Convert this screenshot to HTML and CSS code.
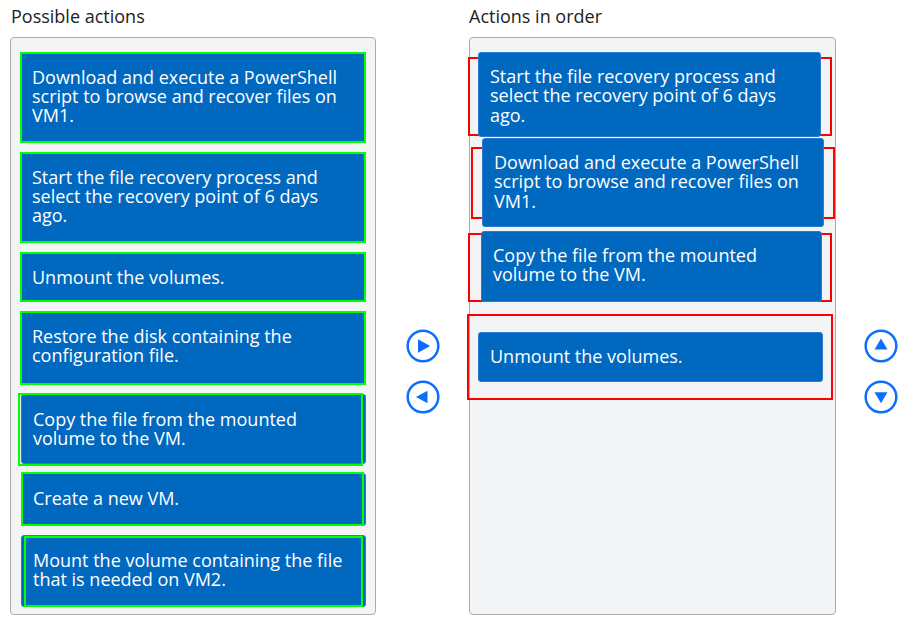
FILE: index.html
```html
<!DOCTYPE html>
<html lang="en">
<head>
<meta charset="utf-8">
<title>Order the actions</title>
<link rel="stylesheet" href="styles.css">
</head>
<body>
<div class="page">
  <section class="col col-left">
    <h2 class="col-title col-title-left">Possible actions</h2>
    <div class="panel panel-left">
      <div class="card card-src c1">Download and execute a PowerShell script to browse and recover files on VM1.</div>
      <div class="card card-src c2">Start the file recovery process and select the recovery point of 6 days ago.</div>
      <div class="card card-src c3">Unmount the volumes.</div>
      <div class="card card-src c4">Restore the disk containing the configuration file.</div>
      <div class="card card-src c5">Copy the file from the mounted volume to the VM.</div>
      <div class="card card-src c6">Create a new VM.</div>
      <div class="card card-src c7">Mount the volume containing the file that is needed on VM2.</div>
    </div>
  </section>

  <div class="mover mover-mid">
    <button class="mv-btn" aria-label="Move right">
      <svg width="34" height="34" viewBox="0 0 34 34"><circle cx="17" cy="17" r="15.3" fill="none" stroke="#0d6efd" stroke-width="2.5"/><polygon points="12,10.3 24.2,17 12,23.7" fill="#0d6efd"/></svg>
    </button>
    <button class="mv-btn" aria-label="Move left">
      <svg width="34" height="34" viewBox="0 0 34 34"><circle cx="17" cy="17" r="15.3" fill="none" stroke="#0d6efd" stroke-width="2.5"/><polygon points="21.5,10.8 10,17 21.5,23.2" fill="#0d6efd"/></svg>
    </button>
  </div>

  <section class="col col-right">
    <h2 class="col-title">Actions in order</h2>
    <div class="panel panel-right">
      <div class="slot s1"><div class="card card-dst d1">Start the file recovery process and select the recovery point of 6 days ago.</div></div>
      <div class="slot s2"><div class="card card-dst d2">Download and execute a PowerShell script to browse and recover files on VM1.</div></div>
      <div class="slot s3"><div class="card card-dst d3">Copy the file from the mounted volume to the VM.</div></div>
      <div class="slot s4"><div class="card card-dst d4">Unmount the volumes.</div></div>
    </div>
  </section>

  <div class="mover mover-side">
    <button class="mv-btn" aria-label="Move up">
      <svg width="34" height="34" viewBox="0 0 34 34"><circle cx="17" cy="17" r="15.3" fill="none" stroke="#0d6efd" stroke-width="2.5"/><polygon points="10.5,20.6 17,9.6 23.5,20.6" fill="#0d6efd"/></svg>
    </button>
    <button class="mv-btn" aria-label="Move down">
      <svg width="34" height="34" viewBox="0 0 34 34"><circle cx="17" cy="17" r="15.3" fill="none" stroke="#0d6efd" stroke-width="2.5"/><polygon points="10.5,12.2 23.5,12.2 17,23.2" fill="#0d6efd"/></svg>
    </button>
  </div>
</div>
</body>
</html>
```

FILE: styles.css
```css
html, body {
  margin: 0;
  padding: 0;
  background: #ffffff;
}

body {
  font-family: "Open Sans", "Liberation Sans", sans-serif;
  color: #333333;
  overflow: hidden;
}

.page {
  display: flex;
  align-items: flex-start;
  padding: 4px 0 0 10px;
}

.col-left { width: 366px; flex: none; }
.col-right { width: 367px; flex: none; }

.col-title {
  margin: 0 0 9px 0;
  font-size: 18px;
  line-height: 24px;
  font-weight: 400;
  color: #222222;
}

.col-title-left { margin-left: 1px; }

.panel {
  box-sizing: border-box;
  height: 578px;
  border: 1px solid #ababab;
  border-radius: 4px;
  background: #f3f4f6;
  display: flex;
  flex-direction: column;
}

.panel-left {
  padding: 14px 9px 0 9px;
  gap: 9px;
}

.card {
  position: relative;
  box-sizing: border-box;
  background: #0068bf;
  border: 1px solid #2a7ccc;
  border-radius: 3px;
  color: #ffffff;
  font-size: 18px;
  line-height: 19.3px;
  padding: 14.5px 14px 0 11px;
  flex: none;
}

.card-src::after {
  content: "";
  position: absolute;
  top: var(--gt, -1px);
  right: var(--gr, -1px);
  bottom: var(--gb, -1px);
  left: var(--gl, -1px);
  border: 2px solid #00ff00;
  pointer-events: none;
}

.c1 { height: 91px; }
.c2 { height: 91px; }
.c3 { height: 50px; }
.c4 { height: 74px; }
.c5 { height: 70px; margin-left: 1px; --gt: -2px; --gl: -4px; --gr: 2px; --gb: -3px; }
.c6 { height: 53px; margin-left: 1px; --gt: -2px; --gr: 1px; }
.c7 { height: 72px; margin-left: 1px; --gt: 0px; --gl: 2px; --gr: 2px; }

.panel-right {
  padding: 0;
}

.slot {
  box-sizing: border-box;
  border: 2px solid #ff0000;
  flex: none;
}

.s1 { height: 79px; margin: 19px 3px 0 -2px; }
.s2 { height: 72px; margin: 11px 0 0 1px; }
.s3 { height: 69px; margin: 14px 3px 0 -2px; }
.s4 { height: 86px; margin: 12px 2px 0 -3px; }

.card-dst { padding-top: 14px; }
.d1 { height: 85px; margin: -7px 9px 0 8px; }
.d2 { height: 89px; margin: -11px 9px 0 9px; }
.d3 { height: 71px; margin: -4px 8px 0 11px; }
.d4 { height: 50px; margin: 16px 8px 0 9px; }

.mover {
  flex: none;
  display: flex;
  flex-direction: column;
  gap: 17px;
  padding-top: 324.5px;
}

.mover-mid {
  width: 93px;
  align-items: center;
}

.mover-side {
  padding-left: 27.7px;
}

.mv-btn {
  display: block;
  width: 34px;
  height: 34px;
  padding: 0;
  margin: 0;
  border: 0;
  background: transparent;
  cursor: pointer;
}

.mv-btn svg { display: block; }
```
